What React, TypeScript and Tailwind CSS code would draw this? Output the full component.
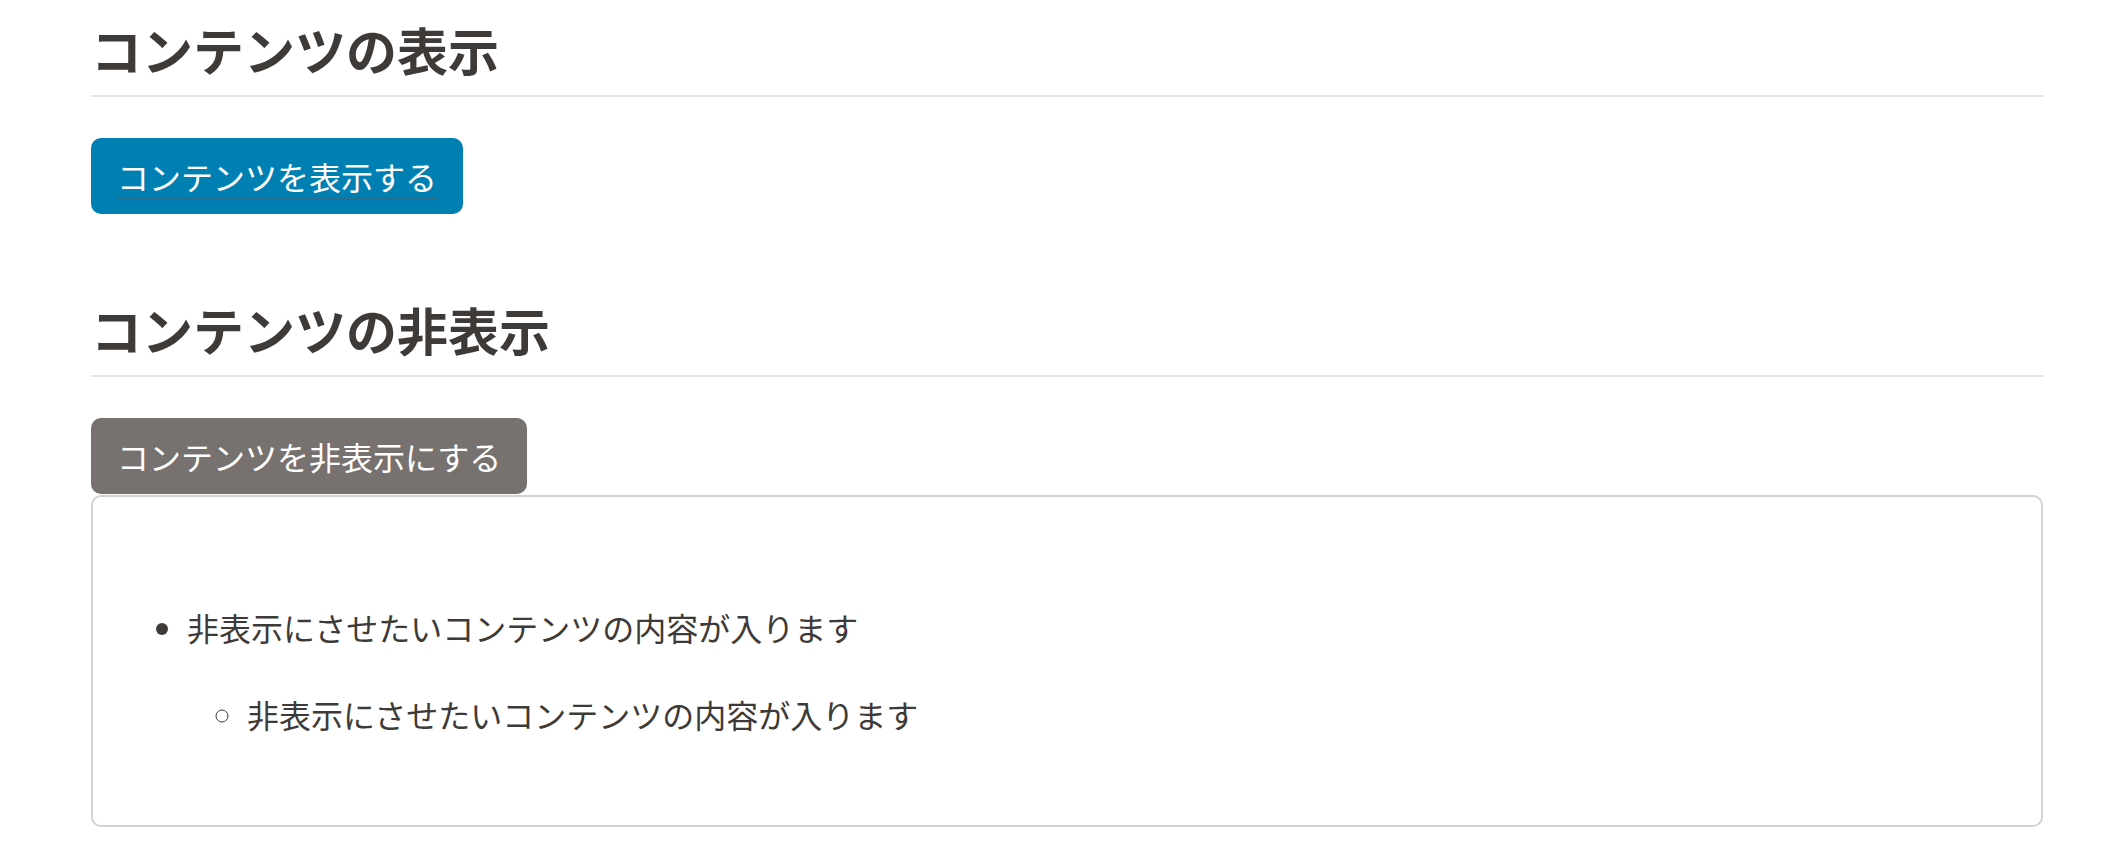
import React from "react";

const jp = "font-['Noto_Sans_CJK_JP','Noto_Sans',sans-serif]";
const itemText = "非表示にさせたいコンテンツの内容が入ります";

function SectionTitle({ children }: { children: React.ReactNode }) {
  return (
    <h2 className="border-b-2 border-[#e3e3e3] pb-[10px] text-[51px] font-bold leading-[72px] text-[#3e3a37]">
      {children}
    </h2>
  );
}

export default function App() {
  return (
    <div className={`min-h-screen bg-white ${jp} text-[#3e3a37]`}>
      <div className="ml-[91px] w-[1952px] pt-[13px]">
        <section>
          <SectionTitle>コンテンツの表示</SectionTitle>
          <div className="mt-[41px]">
            <button className="rounded-[10px] bg-[#0080b2] px-[26px] py-3 text-[32px] leading-[52px] text-white">
              <span className="inline-block border-b-2 border-[#2a6d8d] leading-[44px]">
                コンテンツを表示する
              </span>
            </button>
          </div>
        </section>

        <section className="mt-[79px]">
          <SectionTitle>コンテンツの非表示</SectionTitle>
          <div className="mt-[41px]">
            <button className="rounded-[10px] bg-[#77726f] px-[26px] py-3 text-[32px] leading-[52px] text-white">
              コンテンツを非表示にする
            </button>
          </div>
          <div className="mt-px rounded-[10px] border-2 border-[#d2d2d2] px-[34px] pt-8 pb-[34px]">
            <ul className="mt-[73px] mb-[51px] list-disc pl-[60px] text-[32px] leading-[51px]">
              <li>
                {itemText}
                <ul className="mt-[36px] list-[circle] pl-[60px]">
                  <li>{itemText}</li>
                </ul>
              </li>
            </ul>
          </div>
        </section>
      </div>
    </div>
  );
}
